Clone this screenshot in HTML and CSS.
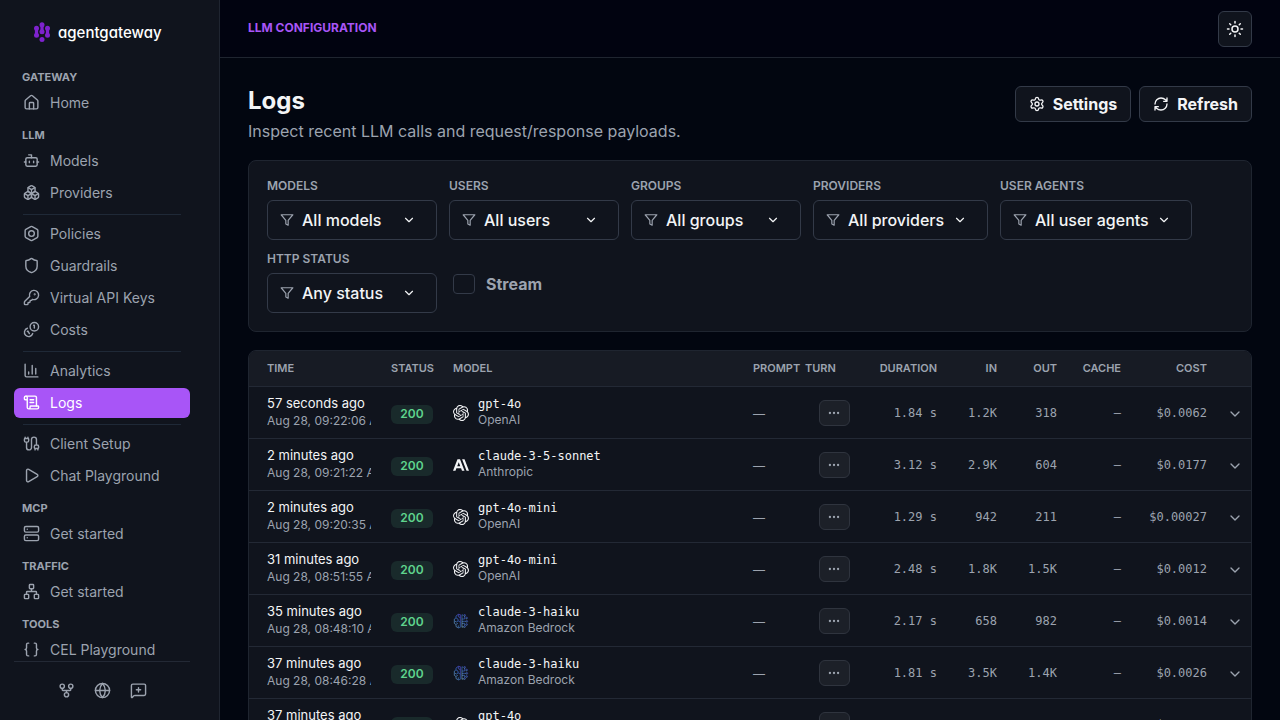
FILE: index.html
```
<!DOCTYPE html>
<html lang="en">
<head>
    <meta charset="UTF-8">
    <meta name="viewport" content="width=device-width, initial-scale=1.0">
    <title>agentgateway - Logs</title>
    <link rel="stylesheet" href="styles.css">
</head>
<body>

    <!-- shared icons -->
    <svg class="sprite" aria-hidden="true">
        <symbol id="i-server" viewBox="0 0 24 24"><rect width="20" height="8" x="2" y="2" rx="2"/><rect width="20" height="8" x="2" y="14" rx="2"/><path d="M6 6h.01M6 18h.01"/></symbol>
        <symbol id="i-funnel" viewBox="0 0 24 24"><path d="M22 3H2l8 9.46V19l4 2v-8.54z"/></symbol>
        <symbol id="i-down" viewBox="0 0 24 24"><path d="m6 9 6 6 6-6"/></symbol>
        <symbol id="i-dots" viewBox="0 0 24 24"><circle cx="12" cy="12" r="1"/><circle cx="19" cy="12" r="1"/><circle cx="5" cy="12" r="1"/></symbol>
        <symbol id="i-openai" viewBox="0 0 24 24"><path d="M22.2819 9.8211a5.9847 5.9847 0 0 0-.5157-4.9108 6.0462 6.0462 0 0 0-6.5098-2.9A6.0651 6.0651 0 0 0 4.9807 4.1818a5.9847 5.9847 0 0 0-3.9977 2.9 6.0462 6.0462 0 0 0 .7427 7.0966 5.98 5.98 0 0 0 .511 4.9107 6.051 6.051 0 0 0 6.5146 2.9001A5.9847 5.9847 0 0 0 13.2599 24a6.0557 6.0557 0 0 0 5.7718-4.2058 5.9894 5.9894 0 0 0 3.9977-2.9001 6.0557 6.0557 0 0 0-.7475-7.0729zm-9.022 12.6081a4.4755 4.4755 0 0 1-2.8764-1.0408l.1419-.0804 4.7783-2.7582a.7948.7948 0 0 0 .3927-.6813v-6.7369l2.02 1.1686a.071.071 0 0 1 .038.052v5.5826a4.504 4.504 0 0 1-4.4945 4.4944zm-9.6607-4.1254a4.4708 4.4708 0 0 1-.5346-3.0137l.142.0852 4.783 2.7582a.7712.7712 0 0 0 .7806 0l5.8428-3.3685v2.3324a.0804.0804 0 0 1-.0332.0615L9.74 19.9502a4.4992 4.4992 0 0 1-6.1408-1.6464zM2.3408 7.8956a4.485 4.485 0 0 1 2.3655-1.9728V11.6a.7664.7664 0 0 0 .3879.6765l5.8144 3.3543-2.0201 1.1685a.0757.0757 0 0 1-.071 0l-4.8303-2.7865A4.504 4.504 0 0 1 2.3408 7.872zm16.5963 3.8558L13.1038 8.364 15.1192 7.2a.0757.0757 0 0 1 .071 0l4.8303 2.7913a4.4944 4.4944 0 0 1-.6765 8.1042v-5.6772a.79.79 0 0 0-.407-.667zm2.0107-3.0231l-.142-.0852-4.7735-2.7818a.7759.7759 0 0 0-.7854 0L9.409 9.2297V6.8974a.0662.0662 0 0 1 .0284-.0615l4.8303-2.7866a4.4992 4.4992 0 0 1 6.6802 4.66zM8.3065 12.863l-2.02-1.1638a.0804.0804 0 0 1-.038-.0567V6.0742a4.4992 4.4992 0 0 1 7.3757-3.4537l-.142.0805L8.704 5.459a.7948.7948 0 0 0-.3927.6813zm1.0976-2.3654l2.602-1.4998 2.6069 1.4998v2.9994l-2.5974 1.4997-2.6067-1.4997Z"/></symbol>
        <symbol id="i-anthropic" viewBox="0 0 24 24"><path d="M17.3041 3.541h-3.6718l6.696 16.918H24Zm-10.6082 0L0 20.459h3.7442l1.3693-3.5527h7.0052l1.3693 3.5528h3.7442L10.5363 3.5409Zm-.3712 10.2232 2.2914-5.9456 2.2914 5.9456Z"/></symbol>
        <linearGradient id="bedrock" x1="1" y1="0" x2="0" y2="1"><stop offset="0" stop-color="#6350fb"/><stop offset=".5" stop-color="#3d7fe8"/><stop offset="1" stop-color="#9ad8f8"/></linearGradient>
        <symbol id="i-bedrock" viewBox="0 0 24 24"><g fill="none" stroke="url(#bedrock)" stroke-width="1" opacity=".85"><path d="M11 2.5v19l-3 .8-3.5-2v-3L2 15.5V9l2.5-1.5V4.5L8 2zM4.5 7.5 7.5 9v3M2.5 12l2.5 1.5 3-1.5 3 1.5M4.5 17l3-1.5M8 2v3.5L11 7M8 22v-3.5"/><path d="M13.5 2.5v19M13.5 9h4V4.5M13.5 12.5h6M13.5 15.5h4v3.500M13.5 21h2.5M13.5 3h1.5"/><circle cx="17.5" cy="3.5" r="1.2"/><circle cx="20.8" cy="12.5" r="1.2"/><circle cx="17.5" cy="20.3" r="1.2"/><circle cx="20.5" cy="7.5" r="1.2"/><circle cx="20.5" cy="17.2" r="1.2"/></g></symbol>
    </svg>

    <div class="app">
        <aside class="sidebar">
            <a class="logo" href="#">
                <svg viewBox="0 0 16 20" width="16" height="20" aria-hidden="true">
                    <g fill="#7e22ce"><circle cx="2.5" cy="6.2" r="2.5"/><circle cx="2.5" cy="13.2" r="2.5"/><circle cx="8" cy="2.8" r="2.5"/><circle cx="8" cy="9.8" r="2.5"/><circle cx="8" cy="17.4" r="2.5"/><circle cx="13.5" cy="6.2" r="2.5"/><circle cx="13.5" cy="13.2" r="2.5"/></g>
                    <path d="M2.5 6v7M8 3v7M13.5 6v7" stroke="#7e22ce" stroke-width="3.2"/>
                </svg>
                <span>agentgateway</span>
            </a>

            <nav class="nav">
                <h2>GATEWAY</h2>
                <a href="#"><svg class="icon" viewBox="0 0 24 24"><path d="M15 21v-8a1 1 0 0 0-1-1h-4a1 1 0 0 0-1 1v8"/><path d="M3 10a2 2 0 0 1 .709-1.528l7-5.999a2 2 0 0 1 2.582 0l7 5.999A2 2 0 0 1 21 10v9a2 2 0 0 1-2 2H5a2 2 0 0 1-2-2z"/></svg>Home</a>

                <h2>LLM</h2>
                <a href="#"><svg class="icon" viewBox="0 0 24 24"><path d="M12 8V4H8"/><rect width="16" height="12" x="4" y="8" rx="2"/><path d="M2 14h2M20 14h2M15 13v2M9 13v2"/></svg>Models</a>
                <a href="#"><svg class="icon" viewBox="0 0 24 24"><path d="M2.97 12.92A2 2 0 0 0 2 14.63v3.24a2 2 0 0 0 .97 1.71l3 1.8a2 2 0 0 0 2.06 0L12 19v-5.5l-5-3-4.03 2.42Z"/><path d="m7 16.5-4.74-2.85M7 16.5l5-3M7 16.5v5.17"/><path d="M12 13.5V19l3.97 2.38a2 2 0 0 0 2.06 0l3-1.8a2 2 0 0 0 .97-1.71v-3.24a2 2 0 0 0-.97-1.71L17 10.5l-5 3Z"/><path d="m17 16.5-5-3M17 16.5l4.74-2.85M17 16.5v5.17"/><path d="M7.97 4.42A2 2 0 0 0 7 6.13v4.37l5 3 5-3V6.13a2 2 0 0 0-.97-1.71l-3-1.8a2 2 0 0 0-2.06 0l-3 1.8Z"/><path d="M12 8 7.26 5.15M12 8l4.74-2.85M12 13.5V8"/></svg>Providers</a>
                <hr>
                <a href="#"><svg class="icon" viewBox="0 0 24 24"><path d="M21 16V8a2 2 0 0 0-1-1.73l-7-4a2 2 0 0 0-2 0l-7 4A2 2 0 0 0 3 8v8a2 2 0 0 0 1 1.73l7 4a2 2 0 0 0 2 0l7-4A2 2 0 0 0 21 16z"/><circle cx="12" cy="12" r="4"/></svg>Policies</a>
                <a href="#"><svg class="icon" viewBox="0 0 24 24"><path d="M20 13c0 5-3.5 7.5-7.66 8.95a1 1 0 0 1-.67-.01C7.5 20.5 4 18 4 13V6a1 1 0 0 1 1-1c2 0 4.5-1.2 6.24-2.72a1.17 1.17 0 0 1 1.52 0C14.51 3.81 17 5 19 5a1 1 0 0 1 1 1z"/></svg>Guardrails</a>
                <a href="#"><svg class="icon" viewBox="0 0 24 24"><path d="M2.586 17.414A2 2 0 0 0 2 18.828V21a1 1 0 0 0 1 1h3a1 1 0 0 0 1-1v-1a1 1 0 0 1 1-1h1a1 1 0 0 0 1-1v-1a1 1 0 0 1 1-1h.172a2 2 0 0 0 1.414-.586l.814-.814a6.5 6.5 0 1 0-4-4z"/><circle cx="16.5" cy="7.5" r=".5" fill="currentColor"/></svg>Virtual API Keys</a>
                <a href="#"><svg class="icon" viewBox="0 0 24 24"><path d="M13.744 17.736a6 6 0 1 1-7.48-7.48M15 6h1v4M6.134 14.768l.866-.5 2 3.464"/><circle cx="16" cy="8" r="6"/></svg>Costs</a>
                <hr>
                <a href="#"><svg class="icon" viewBox="0 0 24 24"><path d="M3 3v16a2 2 0 0 0 2 2h16M18 17V9M13 17V5M8 17v-3"/></svg>Analytics</a>
                <a href="#" class="active"><svg class="icon" viewBox="0 0 24 24"><path d="M15 12h-5M15 8h-5M19 17V5a2 2 0 0 0-2-2H4"/><path d="M8 21h12a2 2 0 0 0 2-2v-1a1 1 0 0 0-1-1H11a1 1 0 0 0-1 1v1a2 2 0 1 1-4 0V5a2 2 0 1 0-4 0v2a1 1 0 0 0 1 1h3"/></svg>Logs</a>
                <hr>
                <a href="#"><svg class="icon" viewBox="0 0 24 24"><path d="M17 19a1 1 0 0 1-1-1v-2a2 2 0 0 1 2-2h2a2 2 0 0 1 2 2v2a1 1 0 0 1-1 1zM17 21v-2M19 14V6.5a1 1 0 0 0-7 0v11a1 1 0 0 1-7 0V10M21 21v-2M3 5V3M4 10a2 2 0 0 1-2-2V6a1 1 0 0 1 1-1h4a1 1 0 0 1 1 1v2a2 2 0 0 1-2 2zM7 5V3"/></svg>Client Setup</a>
                <a href="#"><svg class="icon" viewBox="0 0 24 24"><path d="M5 5a2 2 0 0 1 3.008-1.728l11.997 6.998a2 2 0 0 1 .003 3.458l-12 7A2 2 0 0 1 5 19z"/></svg>Chat Playground</a>

                <h2>MCP</h2>
                <a href="#"><svg class="icon"><use href="#i-server"/></svg>Get started</a>

                <h2>TRAFFIC</h2>
                <a href="#"><svg class="icon" viewBox="0 0 24 24"><rect x="16" y="16" width="6" height="6" rx="1"/><rect x="2" y="16" width="6" height="6" rx="1"/><rect x="9" y="2" width="6" height="6" rx="1"/><path d="M5 16v-3a1 1 0 0 1 1-1h12a1 1 0 0 1 1 1v3M12 12V8"/></svg>Get started</a>

                <h2>TOOLS</h2>
                <a href="#"><svg class="icon" viewBox="0 0 24 24"><path d="M8 3H7a2 2 0 0 0-2 2v5a2 2 0 0 1-2 2 2 2 0 0 1 2 2v5c0 1.1.9 2 2 2h1M16 21h1a2 2 0 0 0 2-2v-5c0-1.1.9-2 2-2a2 2 0 0 1-2-2V5a2 2 0 0 0-2-2h-1"/></svg>CEL Playground</a>
            </nav>

            <div class="sidebar-footer">
                <a href="#" aria-label="Source"><svg class="icon" viewBox="0 0 24 24"><circle cx="12" cy="18" r="3"/><circle cx="6" cy="6" r="3"/><circle cx="18" cy="6" r="3"/><path d="M18 9v2c0 .6-.4 1-1 1H7c-.6 0-1-.4-1-1V9M12 12v3"/></svg></a>
                <a href="#" aria-label="Website"><svg class="icon" viewBox="0 0 24 24"><circle cx="12" cy="12" r="10"/><path d="M12 2a14.5 14.5 0 0 0 0 20 14.5 14.5 0 0 0 0-20M2 12h20"/></svg></a>
                <a href="#" aria-label="Feedback"><svg class="icon" viewBox="0 0 24 24"><path d="M22 17a2 2 0 0 1-2 2H6.828a2 2 0 0 0-1.414.586l-2.202 2.202A.71.71 0 0 1 2 21.286V5a2 2 0 0 1 2-2h16a2 2 0 0 1 2 2zM12 8v6M9 11h6"/></svg></a>
            </div>
        </aside>

        <div class="page">
            <header class="topbar">
                <span class="section">LLM CONFIGURATION</span>
                <button class="btn theme" aria-label="Toggle theme"><svg class="icon" viewBox="0 0 24 24"><circle cx="12" cy="12" r="4"/><path d="M12 2v2M12 20v2M4.93 4.93l1.41 1.41M17.66 17.66l1.41 1.41M2 12h2M20 12h2M6.34 17.66l-1.41 1.41M19.07 4.93l-1.41 1.41"/></svg></button>
            </header>

            <main class="content">
                <div class="page-head">
                    <div>
                        <h1>Logs</h1>
                        <p>Inspect recent LLM calls and request/response payloads.</p>
                    </div>
                    <div class="actions">
                        <button class="btn"><svg class="icon" viewBox="0 0 24 24"><path d="M9.671 4.136a2.34 2.34 0 0 1 4.659 0 2.34 2.34 0 0 0 3.319 1.915 2.34 2.34 0 0 1 2.33 4.033 2.34 2.34 0 0 0 0 3.831 2.34 2.34 0 0 1-2.33 4.033 2.34 2.34 0 0 0-3.319 1.915 2.34 2.34 0 0 1-4.659 0 2.34 2.34 0 0 0-3.32-1.915 2.34 2.34 0 0 1-2.33-4.033 2.34 2.34 0 0 0 0-3.831A2.34 2.34 0 0 1 6.35 6.051a2.34 2.34 0 0 0 3.319-1.915"/><circle cx="12" cy="12" r="3"/></svg>Settings</button>
                        <button class="btn"><svg class="icon" viewBox="0 0 24 24"><path d="M3 12a9 9 0 0 1 9-9 9.75 9.75 0 0 1 6.74 2.74L21 8M21 3v5h-5M21 12a9 9 0 0 1-9 9 9.75 9.75 0 0 1-6.74-2.74L3 16M8 16H3v5"/></svg>Refresh</button>
                    </div>
                </div>

                <form class="filters card">
                    <div class="field">
                        <label for="models">MODELS</label>
                        <div class="select"><svg class="icon funnel"><use href="#i-funnel"/></svg><select id="models"><option>All models</option></select><svg class="icon down"><use href="#i-down"/></svg></div>
                    </div>
                    <div class="field">
                        <label for="users">USERS</label>
                        <div class="select"><svg class="icon funnel"><use href="#i-funnel"/></svg><select id="users"><option>All users</option></select><svg class="icon down"><use href="#i-down"/></svg></div>
                    </div>
                    <div class="field">
                        <label for="groups">GROUPS</label>
                        <div class="select"><svg class="icon funnel"><use href="#i-funnel"/></svg><select id="groups"><option>All groups</option></select><svg class="icon down"><use href="#i-down"/></svg></div>
                    </div>
                    <div class="field">
                        <label for="providers">PROVIDERS</label>
                        <div class="select"><svg class="icon funnel"><use href="#i-funnel"/></svg><select id="providers"><option>All providers</option></select><svg class="icon down"><use href="#i-down"/></svg></div>
                    </div>
                    <div class="field">
                        <label for="agents">USER AGENTS</label>
                        <div class="select"><svg class="icon funnel"><use href="#i-funnel"/></svg><select id="agents"><option>All user agents</option></select><svg class="icon down"><use href="#i-down"/></svg></div>
                    </div>
                    <div class="field">
                        <label for="status">HTTP STATUS</label>
                        <div class="select"><svg class="icon funnel"><use href="#i-funnel"/></svg><select id="status"><option>Any status</option></select><svg class="icon down"><use href="#i-down"/></svg></div>
                    </div>
                    <label class="check"><input type="checkbox">Stream</label>
                </form>

                <div class="card table-card">
                    <table class="logs">
                        <colgroup>
                            <col class="c-time"><col class="c-status"><col><col class="c-prompt"><col class="c-turn"><col class="c-duration"><col class="c-tokens"><col class="c-tokens"><col class="c-cache"><col class="c-cost"><col class="c-expand">
                        </colgroup>
                        <thead>
                            <tr>
                                <th>TIME</th><th>STATUS</th><th>MODEL</th><th>PROMPT</th><th>TURN</th>
                                <th class="num">DURATION</th><th class="num">IN</th><th class="num">OUT</th><th class="num">CACHE</th><th class="num">COST</th><th></th>
                            </tr>
                        </thead>
                        <tbody>
                            <tr>
                                <td><div class="ago">57 seconds ago</div><div class="date">Aug 28, 09:22:06 AM</div></td>
                                <td><span class="badge">200</span></td>
                                <td><div class="model"><svg><use href="#i-openai"/></svg><div><code>gpt-4o</code><small>OpenAI</small></div></div></td>
                                <td>—</td>
                                <td><button class="more" aria-label="Show turn"><svg class="icon"><use href="#i-dots"/></svg></button></td>
                                <td class="num">1.84 s</td><td class="num">1.2K</td><td class="num">318</td><td class="num">—</td><td class="num">$0.0062</td>
                                <td><button class="expand" aria-label="Expand row"><svg class="icon"><use href="#i-down"/></svg></button></td>
                            </tr>
                            <tr>
                                <td><div class="ago">2 minutes ago</div><div class="date">Aug 28, 09:21:22 AM</div></td>
                                <td><span class="badge">200</span></td>
                                <td><div class="model"><svg><use href="#i-anthropic"/></svg><div><code>claude-3-5-sonnet</code><small>Anthropic</small></div></div></td>
                                <td>—</td>
                                <td><button class="more" aria-label="Show turn"><svg class="icon"><use href="#i-dots"/></svg></button></td>
                                <td class="num">3.12 s</td><td class="num">2.9K</td><td class="num">604</td><td class="num">—</td><td class="num">$0.0177</td>
                                <td><button class="expand" aria-label="Expand row"><svg class="icon"><use href="#i-down"/></svg></button></td>
                            </tr>
                            <tr>
                                <td><div class="ago">2 minutes ago</div><div class="date">Aug 28, 09:20:35 AM</div></td>
                                <td><span class="badge">200</span></td>
                                <td><div class="model"><svg><use href="#i-openai"/></svg><div><code>gpt-4o-mini</code><small>OpenAI</small></div></div></td>
                                <td>—</td>
                                <td><button class="more" aria-label="Show turn"><svg class="icon"><use href="#i-dots"/></svg></button></td>
                                <td class="num">1.29 s</td><td class="num">942</td><td class="num">211</td><td class="num">—</td><td class="num">$0.00027</td>
                                <td><button class="expand" aria-label="Expand row"><svg class="icon"><use href="#i-down"/></svg></button></td>
                            </tr>
                            <tr>
                                <td><div class="ago">31 minutes ago</div><div class="date">Aug 28, 08:51:55 AM</div></td>
                                <td><span class="badge">200</span></td>
                                <td><div class="model"><svg><use href="#i-openai"/></svg><div><code>gpt-4o-mini</code><small>OpenAI</small></div></div></td>
                                <td>—</td>
                                <td><button class="more" aria-label="Show turn"><svg class="icon"><use href="#i-dots"/></svg></button></td>
                                <td class="num">2.48 s</td><td class="num">1.8K</td><td class="num">1.5K</td><td class="num">—</td><td class="num">$0.0012</td>
                                <td><button class="expand" aria-label="Expand row"><svg class="icon"><use href="#i-down"/></svg></button></td>
                            </tr>
                            <tr>
                                <td><div class="ago">35 minutes ago</div><div class="date">Aug 28, 08:48:10 AM</div></td>
                                <td><span class="badge">200</span></td>
                                <td><div class="model"><svg><use href="#i-bedrock"/></svg><div><code>claude-3-haiku</code><small>Amazon Bedrock</small></div></div></td>
                                <td>—</td>
                                <td><button class="more" aria-label="Show turn"><svg class="icon"><use href="#i-dots"/></svg></button></td>
                                <td class="num">2.17 s</td><td class="num">658</td><td class="num">982</td><td class="num">—</td><td class="num">$0.0014</td>
                                <td><button class="expand" aria-label="Expand row"><svg class="icon"><use href="#i-down"/></svg></button></td>
                            </tr>
                            <tr>
                                <td><div class="ago">37 minutes ago</div><div class="date">Aug 28, 08:46:28 AM</div></td>
                                <td><span class="badge">200</span></td>
                                <td><div class="model"><svg><use href="#i-bedrock"/></svg><div><code>claude-3-haiku</code><small>Amazon Bedrock</small></div></div></td>
                                <td>—</td>
                                <td><button class="more" aria-label="Show turn"><svg class="icon"><use href="#i-dots"/></svg></button></td>
                                <td class="num">1.81 s</td><td class="num">3.5K</td><td class="num">1.4K</td><td class="num">—</td><td class="num">$0.0026</td>
                                <td><button class="expand" aria-label="Expand row"><svg class="icon"><use href="#i-down"/></svg></button></td>
                            </tr>
                            <tr>
                                <td><div class="ago">37 minutes ago</div><div class="date">Aug 28, 08:46:02 AM</div></td>
                                <td><span class="badge">200</span></td>
                                <td><div class="model"><svg><use href="#i-openai"/></svg><div><code>gpt-4o</code><small>OpenAI</small></div></div></td>
                                <td>—</td>
                                <td><button class="more" aria-label="Show turn"><svg class="icon"><use href="#i-dots"/></svg></button></td>
                                <td class="num">1.62 s</td><td class="num">1.1K</td><td class="num">402</td><td class="num">—</td><td class="num">$0.0068</td>
                                <td><button class="expand" aria-label="Expand row"><svg class="icon"><use href="#i-down"/></svg></button></td>
                            </tr>
                        </tbody>
                    </table>
                </div>
            </main>
        </div>
    </div>

</body>
</html>
```

FILE: styles.css
```
* {
    box-sizing: border-box;
}
body {
    margin: 0;
    background: #020610;
    color: #f3f4f6;
    font-family: Inter, "Liberation Sans", sans-serif;
    font-size: 16px;
}
button, select, input {
    font: inherit;
    color: inherit;
}
h1, h2, p {
    margin: 0;
}
.sprite {
    position: absolute;
    width: 0;
    height: 0;
}
.icon {
    width: 16px;
    height: 16px;
    flex: none;
    fill: none;
    stroke: currentColor;
    stroke-width: 2;
    stroke-linecap: round;
    stroke-linejoin: round;
}
.app {
    display: flex;
    height: 100vh;
}

/* sidebar */
.sidebar {
    display: flex;
    flex-direction: column;
    flex: none;
    width: 220px;
    padding: 0 29px 0 14px;
    background: #10141d;
    border-right: 1px solid #1f2530;
}
.logo {
    display: flex;
    align-items: center;
    flex: none;
    gap: 8px;
    height: 62px;
    padding: 2px 0 0 20px;
    color: #fff;
    font-size: 15px;
    font-weight: 500;
    font-feature-settings: "cv11";
    text-decoration: none;
}
.nav {
    display: flex;
    flex-direction: column;
    flex: 1;
    gap: 2px;
    min-height: 0;
    overflow-y: auto;
    scrollbar-width: none;
}
.nav h2 {
    flex: none;
    padding: 6px 8px 0;
    color: #9ca3af;
    font-size: 11px;
    font-weight: 700;
    line-height: 18px;
}
.nav a {
    display: flex;
    align-items: center;
    flex: none;
    gap: 10px;
    height: 30px;
    padding: 0 9px 2px;
    border-radius: 6px;
    color: #9ca3af;
    font-size: 14px;
    text-decoration: none;
}
.nav .icon, .sidebar-footer .icon {
    width: 17px;
    height: 17px;
}
.nav a.active {
    background: #a855f7;
    color: #fff;
}
.nav hr {
    flex: none;
    height: 1px;
    margin: 4px 9px 2px;
    border: 0;
    background: #1f2937;
}
.sidebar-footer {
    display: flex;
    align-items: center;
    justify-content: center;
    flex: none;
    gap: 19px;
    height: 59px;
    padding-bottom: 2px;
    border-top: 1px solid #232935;
}
.sidebar-footer a {
    display: flex;
    color: #9ca3af;
}

/* page */
.page {
    display: flex;
    flex-direction: column;
    flex: 1;
    min-width: 0;
}
.topbar {
    display: flex;
    align-items: center;
    justify-content: space-between;
    flex: none;
    height: 58px;
    padding: 0 28px;
    background: #010310;
    border-bottom: 1px solid #1f2530;
}
.section {
    padding-bottom: 2px;
    color: #a855f7;
    font-size: 12px;
    font-weight: 700;
}
.btn {
    display: flex;
    align-items: center;
    justify-content: center;
    gap: 8px;
    height: 36px;
    padding: 0 13px;
    border: 1px solid #333a48;
    border-radius: 6px;
    background: #10141d;
    font-weight: 700;
    cursor: pointer;
}
.btn.theme {
    width: 34px;
    padding: 0;
}
.theme .icon {
    width: 18px;
    height: 18px;
}
.content {
    flex: 1;
    min-height: 0;
    padding: 28px;
    overflow-y: auto;
    scrollbar-width: none;
}
.page-head {
    display: flex;
    align-items: flex-start;
    justify-content: space-between;
    margin-bottom: 18px;
}
.page-head h1 {
    font-size: 24px;
    font-weight: 700;
    line-height: 30px;
}
.page-head p {
    margin-top: 4px;
    color: #9ca3af;
    line-height: 22px;
}
.actions {
    display: flex;
    gap: 8px;
}
.card {
    background: #10141d;
    border: 1px solid #1f2530;
    border-radius: 8px;
}

/* filters */
.filters {
    display: flex;
    flex-wrap: wrap;
    gap: 12px;
    margin-bottom: 18px;
    padding: 18px;
}
.field label {
    display: block;
    margin-bottom: 8px;
    color: #9ca3af;
    font-size: 12px;
    font-weight: 600;
    line-height: 13px;
}
.select {
    position: relative;
}
.select select {
    display: block;
    min-width: 170px;
    height: 40px;
    padding: 0 42px 0 34px;
    appearance: none;
    border: 1px solid #333a48;
    border-radius: 6px;
    background: #10141d;
    font-weight: 500;
}
.select .icon {
    position: absolute;
    top: 13px;
    width: 14px;
    height: 14px;
    pointer-events: none;
}
.funnel {
    left: 13px;
    color: #9ca3af;
}
.select .down {
    right: 21px;
}
.check {
    display: flex;
    align-items: center;
    align-self: flex-start;
    gap: 11px;
    padding: 22px 4px 0;
    color: #9ca3af;
    font-weight: 700;
    line-height: 20px;
}
.check input {
    width: 22px;
    height: 20px;
    margin: 0;
    appearance: none;
    border: 1px solid #333a48;
    border-radius: 4px;
}

/* logs table */
.table-card {
    overflow: hidden;
}
.logs {
    width: 100%;
    table-layout: fixed;
    border-collapse: collapse;
}
.c-time { width: 132px; }
.c-status { width: 62px; }
.c-prompt { width: 52px; }
.c-turn { width: 78px; }
.c-duration { width: 74px; }
.c-tokens { width: 60px; }
.c-cache { width: 64px; }
.c-cost { width: 86px; }
.c-expand { width: 34px; }
.logs th {
    height: 35px;
    padding: 0 0 0 10px;
    border-bottom: 1px solid #232935;
    background: #171b24;
    color: #9ca3af;
    font-size: 11px;
    font-weight: 600;
    text-align: left;
    white-space: nowrap;
}
.logs td {
    height: 52px;
    padding: 2px 10px 0;
    border-bottom: 1px solid #232935;
    color: #9ca3af;
    font-size: 12px;
    white-space: nowrap;
}
.logs th:first-child {
    padding-left: 18px;
}
.logs td:first-child {
    padding: 0 10px 0 18px;
}
.logs .num {
    padding-left: 0;
    padding-right: 10px;
    text-align: right;
}
.logs td.num {
    font-family: "DejaVu Sans Mono", monospace;
}
.ago {
    color: #f3f4f6;
    font-size: 13px;
    line-height: 17px;
}
.date {
    overflow: hidden;
    line-height: 17px;
}
.badge {
    display: block;
    width: 42px;
    margin-top: 3px;
    padding-bottom: 2px;
    border-radius: 6px;
    background: #192a2b;
    color: #5fd38d;
    font-size: 12px;
    font-weight: 600;
    line-height: 17px;
    text-align: center;
}
.model {
    display: flex;
    align-items: center;
    gap: 9px;
}
.model svg {
    width: 16px;
    height: 16px;
    flex: none;
    fill: #f3f4f6;
}
.model div {
    padding-bottom: 2px;
}
.model code {
    display: block;
    color: #f3f4f6;
    font-family: "DejaVu Sans Mono", monospace;
    font-size: 12px;
    line-height: 16px;
}
.model small {
    display: block;
    font-size: 12px;
    line-height: 16px;
}
.more {
    display: flex;
    align-items: center;
    justify-content: center;
    width: 31px;
    height: 26px;
    margin: 0 auto;
    padding: 0;
    border: 1px solid #2f343e;
    border-radius: 6px;
    background: #1c2028;
    color: #9ca3af;
}
.more .icon {
    width: 14px;
    height: 14px;
}
.expand {
    display: flex;
    padding: 2px 0 0;
    border: 0;
    background: none;
    color: #9ca3af;
}
```
